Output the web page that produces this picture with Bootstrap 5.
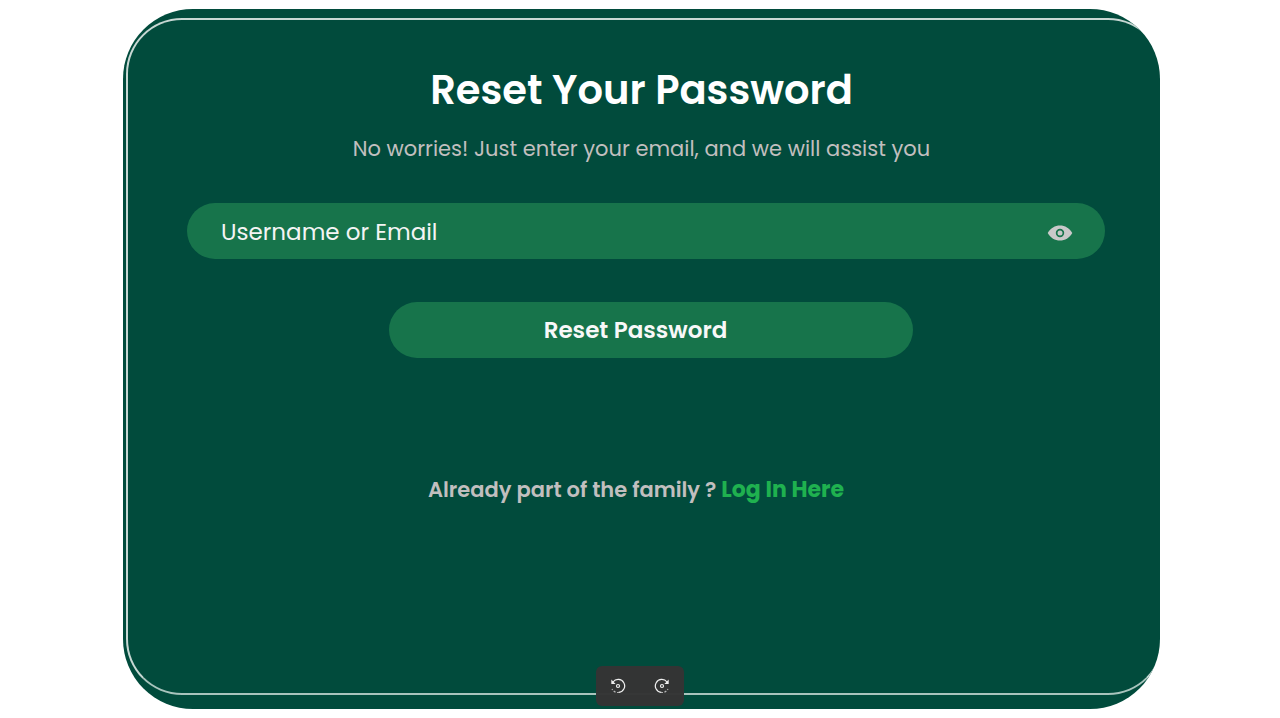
<!DOCTYPE html>
<html lang="en">
<head>
<meta charset="utf-8">
<meta name="viewport" content="width=device-width, initial-scale=1">
<title>Reset Your Password</title>
<link href="https://cdn.jsdelivr.net/npm/bootstrap@5.3.0/dist/css/bootstrap.min.css" rel="stylesheet">
<style>
  body { background: #fff; font-family: Poppins, Inter, sans-serif; }
  .page-wrap { padding: 9px 120px 9px 123px; }
  .reset-panel {
    background: #014b3c;
    border-radius: 70px;
    min-height: calc(100vh - 18px);
    padding: 54px 55px 60px 64px;
  }
  /* thin frame, shifted so that the panel clips its right side */
  .reset-panel::before {
    content: "";
    position: absolute;
    inset: 9px -4px 14px 3px;
    border: 2px solid #c8d8d4;
    border-bottom-color: #a9c4bd;
    border-radius: 56px;
    pointer-events: none;
  }
  .reset-head { padding-right: 9px; }
  .reset-title { font-size: 40px; line-height: 54px; font-weight: 600; margin-bottom: 18px; }
  .reset-note { font-size: 21px; line-height: 28px; color: #c1bfbf; margin-bottom: 40px; }
  .reset-input, .reset-input:focus {
    height: 56px;
    padding: 2px 88px 0 34px;
    font-size: 23px;
    color: #f4f4f4;
    background: #17744b;
    border: 0;
  }
  .reset-input::placeholder { color: #f4f4f4; opacity: 1; }
  .eye-btn { right: 32px; line-height: 0; }
  .reset-btn, .reset-btn:hover {
    width: 57%;
    min-width: 524px;
    height: 56px;
    padding: 0 30px 0 0;
    font-size: 23px;
    font-weight: 600;
    color: #f8f8f8;
    background: #17744b;
    border: 0;
  }
  .btn-row { padding-left: 9px; margin: 43px 0 116px; }
  .login-line { font-size: 21px; line-height: 32px; font-weight: 600; color: #c1bfbf; padding-right: 20px; }
  .login-line a { font-size: 22px; color: #1fb14f; font-weight: 700; }
  .rotate-bar { bottom: 12px; background: rgba(52, 52, 52, .98); border-radius: 6px; }
  .rotate-bar button { width: 44px; height: 40px; }
</style>
</head>
<body>
<main class="page-wrap">
  <section class="reset-panel position-relative overflow-hidden">
    <form onsubmit="return false">
      <div class="reset-head text-center">
        <h1 class="reset-title text-white">Reset Your Password</h1>
        <p class="reset-note">No worries! Just enter your email, and we will assist you</p>
      </div>
      <div class="position-relative">
        <input type="text" class="form-control rounded-pill reset-input" placeholder="Username or Email" aria-label="Username or Email">
        <button type="button" class="eye-btn btn p-0 border-0 position-absolute top-50 translate-middle-y" aria-label="Show">
          <svg width="26" height="20" viewBox="0 0 26 20"><path fill="#c9c9c9" fill-rule="evenodd" d="M.7 12C3.500 7 8 4.500 13 4.500S22.500 7 25.300 12C22.500 17 18 19.500 13 19.500S3.500 17 .7 12ZM13 7.800a4.200 4.200 0 1 0 0 8.400a4.200 4.200 0 0 0 0-8.400Z"/><circle cx="13" cy="12" r="2.500" fill="#c9c9c9"/></svg>
        </button>
      </div>
      <div class="btn-row text-center">
        <button type="submit" class="btn rounded-pill reset-btn">Reset Password</button>
      </div>
      <p class="login-line text-center mb-0">Already part of the family ? <a href="#" class="text-decoration-none">Log In Here</a></p>
    </form>
  </section>
</main>
<div class="rotate-bar d-flex position-fixed start-50 translate-middle-x" role="toolbar" aria-label="Rotate">
  <button type="button" class="btn p-0 border-0 d-flex align-items-center justify-content-center" aria-label="Rotate left">
    <svg width="16" height="16" viewBox="0 0 16 16" fill="none" stroke="#f0f0f0" stroke-width="1.200"><path d="M3 4A6.500 6.500 0 1 1 9 14.400"/><path d="M9 14.400A6.500 6.500 0 0 1 2 11" stroke-dasharray="2 1.500" opacity=".7"/><path d="M1.300 1.500V6H5.600Z" fill="#f0f0f0" stroke="none"/><circle cx="8" cy="8" r="1.500"/></svg>
  </button>
  <button type="button" class="btn p-0 border-0 d-flex align-items-center justify-content-center" aria-label="Rotate right">
    <svg width="16" height="16" viewBox="0 0 16 16" fill="none" stroke="#f0f0f0" stroke-width="1.200"><path d="M13 4A6.500 6.500 0 1 0 7 14.400"/><path d="M7 14.400A6.500 6.500 0 0 0 14 11" stroke-dasharray="2 1.500" opacity=".7"/><path d="M14.700 1.500V6H10.400Z" fill="#f0f0f0" stroke="none"/><circle cx="8" cy="8" r="1.500"/></svg>
  </button>
</div>
<script src="https://cdn.jsdelivr.net/npm/bootstrap@5.3.0/dist/js/bootstrap.bundle.min.js"></script>
</body>
</html>
